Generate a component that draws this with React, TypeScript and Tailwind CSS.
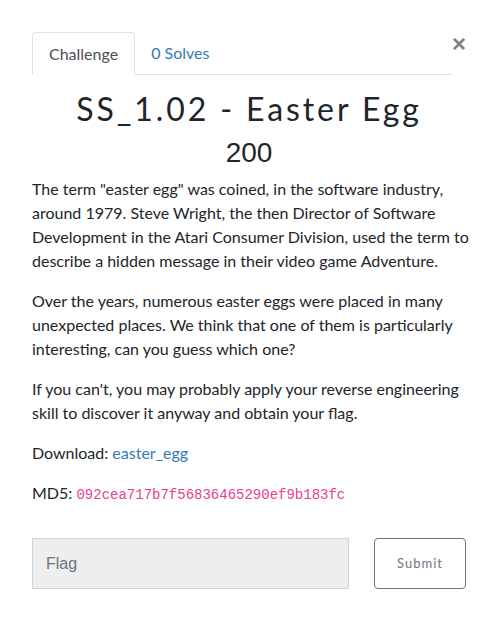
import React from 'react';

const App: React.FC = () => {
  return (
    <div className="min-h-screen bg-white px-8 pt-8 text-[#212529] font-['Lato','Liberation_Sans',sans-serif]">
      <div className="flex items-start">
        <div className="flex w-[420px] shrink-0 border-b border-[#dee2e6]">
          <div className="-mb-px rounded-t border border-[#dee2e6] border-b-white bg-white px-4 pb-2 pt-[9px] text-base leading-6 text-[#495057]">
            Challenge
          </div>
          <div className="px-4 pb-2 pt-[9px] text-base leading-6 text-[#337ab7]">0 Solves</div>
        </div>
        <button className="ml-auto mr-[1px] text-2xl font-bold leading-none text-[#808080] font-['Liberation_Sans',sans-serif]">
          ×
        </button>
      </div>

      <h2 className="mt-[15px] text-center text-[32px] font-normal leading-[38px] tracking-[2.9px] text-[#212529] font-['Lato',sans-serif]">
        SS_1.02 - Easter Egg
      </h2>
      <h3 className="mt-2 text-center text-[28px] leading-[34px] text-[#212529] font-['Liberation_Sans',sans-serif]">
        200
      </h3>

      <div className="-mr-2 mt-[7px] text-base leading-6">
        <p className="mb-4">
          The term "easter egg" was coined, in the software industry, around 1979. Steve Wright, the then Director of
          Software Development in the Atari Consumer Division, used the term to describe a hidden message in their video
          game Adventure.
        </p>
        <p className="mb-4">
          Over the years, numerous easter eggs were placed in many unexpected places. We think that one of them is
          particularly interesting, can you guess which one?
        </p>
        <p className="mb-4">
          If you can't, you may probably apply your reverse engineering skill to discover it anyway and obtain your flag.
        </p>
        <p className="mb-4">
          Download: <a className="text-[#337ab7]">easter_egg</a>
        </p>
        <p className="mb-4">
          MD5:{' '}
          <code className="text-[14px] text-[#e83e8c] font-['Liberation_Mono',monospace]">
            092cea717b7f56836465290ef9b183fc
          </code>
        </p>
      </div>

      <div className="mt-[31px] flex items-center">
        <div className="flex h-[51px] w-[317px] items-center border border-[#ced4da] bg-[#eeeeee] px-[13px] text-base text-[#6c757d] font-['Liberation_Sans',sans-serif]">
          Flag
        </div>
        <button className="ml-[25px] h-[51px] w-[92px] rounded border border-[#6c757d] bg-white text-[13px] tracking-[1px] text-[#6c757d]">
          Submit
        </button>
      </div>
    </div>
  );
};

export default App;
